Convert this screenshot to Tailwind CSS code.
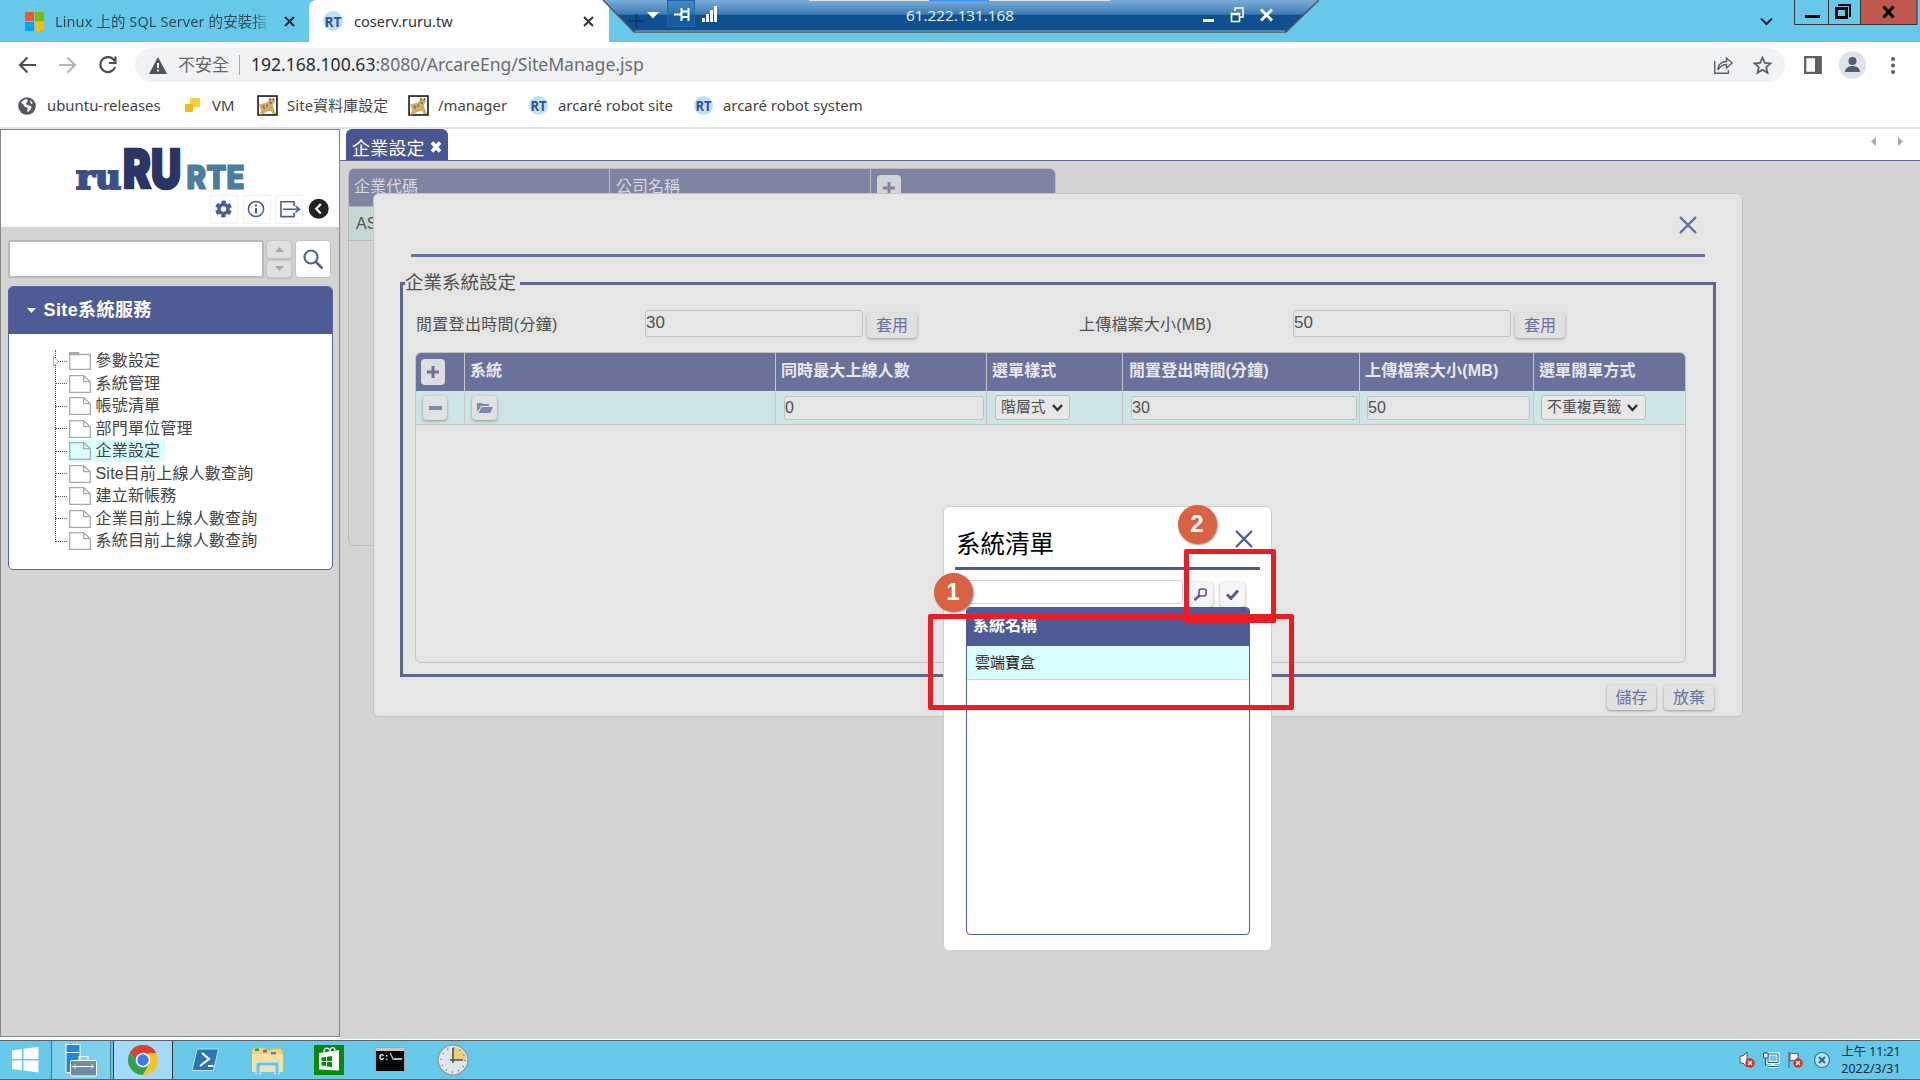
<!DOCTYPE html>
<html lang="zh-Hant">
<head>
<meta charset="utf-8">
<title>coserv.ruru.tw</title>
<script src="https://cdn.jsdelivr.net/npm/@tailwindcss/browser@4"></script>
</head>
<body class="relative flex h-[1080px] w-[1920px] flex-col overflow-hidden bg-white font-['Liberation_Sans','Noto_Sans_CJK_TC',sans-serif] text-[16px] text-[#333]">

<svg class="hidden">
  <symbol id="rt" viewBox="0 0 20 20"><circle cx="10" cy="10" r="10" fill="#bfe1f7"/><text x="1.5" y="15.5" font-size="15" font-weight="700" font-family="Open Sans" fill="#35508c" textLength="17" lengthAdjust="spacingAndGlyphs">RT</text></symbol>
  <symbol id="cat" viewBox="0 0 20 20"><rect x="1" y="1" width="18" height="18" fill="#fff" stroke="#222" stroke-width="1.6"/><path d="M2 9l4-1 4-1 2-4 2 1 3-1v4l-2 2 1 4 2 5h-3l-2-3-4 1-3 2-4 1 2-4z" fill="#d0ac68"/><path d="M12 3l1 2M16 3l-1 2M6 10l1 3M10 9l-1 2M12 7l2 1" fill="none" stroke="#6d5836" stroke-width="1.200"/></symbol>
  <symbol id="file" viewBox="0 0 22 18"><path d="M.7.7h14l6.600 6v10.600H.7zM14.700.7v6h6.600" fill="none" stroke="#aaa" stroke-width="1.3"/></symbol>
  <symbol id="bad" viewBox="0 0 10 10"><circle cx="5" cy="5" r="4.7" fill="#d92b20"/><path d="M3 3l4 4M7 3L3 7" stroke="#fff" stroke-width="1.5"/></symbol>
</svg>

<!-- Tab strip -->
<header class="flex h-[42px] shrink-0 items-start bg-[#67c9ea] font-['Noto_Sans','Noto_Sans_CJK_TC',sans-serif] text-[14.5px]">
  <div class="flex h-[42px] w-[309px] items-center pl-[25px]">
    <svg class="size-[19px]" viewBox="0 0 19 19"><path fill="#f35325" d="M0 0h9v9H0z"/><path fill="#7fba00" d="M10 0h9v9h-9z"/><path fill="#00a4ef" d="M0 10h9v9H0z"/><path fill="#ffba08" d="M10 10h9v9h-9z"/></svg>
    <div class="mt-[2px] ml-[11px] w-[215px] bg-linear-to-r from-[#2c4450] from-92% to-[#67c9ea] bg-clip-text tracking-[0.1px] whitespace-nowrap text-transparent">Linux 上的 SQL Server 的安裝指</div>
    <svg class="ml-[14px] size-[11px]" viewBox="0 0 11 11"><path d="M1 1l9 9M10 1l-9 9" stroke="#223" stroke-width="1.9"/></svg>
  </div>
  <div class="flex h-[42px] w-[300px] items-center rounded-t-lg bg-white pl-[14px]">
    <svg class="size-[20px]"><use href="#rt"/></svg>
    <span class="mt-[2px] ml-[11px] w-[229px] tracking-[0.05px]">coserv.ruru.tw</span>
    <svg class="size-[11px]" viewBox="0 0 11 11"><path d="M1 1l9 9M10 1l-9 9" stroke="#333" stroke-width="1.9"/></svg>
  </div>
  <svg class="-ml-[6px] h-[33px] w-[716px]" viewBox="603 0 716 33">
    <defs><linearGradient id="rdp" x1="0" y1="0" x2="0" y2="1"><stop offset="0" stop-color="#7aacd8"/><stop offset=".45" stop-color="#3d7cb5"/><stop offset=".46" stop-color="#11508f"/><stop offset="1" stop-color="#11508f"/></linearGradient></defs>
    <path d="M603 0h716l-33 32H634z" fill="url(#rdp)"/>
    <path d="M603 0l31 32h652l33-32" fill="none" stroke="#555" stroke-width="1.5"/>
    <path d="M635 31h650" stroke="#8bb0d6"/>
    <path d="M809 .5h301" stroke="#dde1e6"/><path d="M929 .5h60" stroke="#3a93ff" stroke-width="1.5"/>
    <path d="M629 21h15M636.500 14v14" stroke="#123a70" stroke-width="2"/>
    <path d="M647 12h12l-6 6.500z" fill="#fff"/>
    <rect x="667.500" y=".5" width="27" height="26" fill="#1a67b0" fill-opacity=".5" stroke="#1c66b0"/>
    <path d="M674 14.500h7M681.500 8v13M681 11.500h8M681 17h8M688.500 8v13" stroke="#fff" stroke-width="2" fill="none"/>
    <path d="M702 18h3v4h-3zM706 14h3v8h-3zM710 10h3v12h-3zM714 6h3v16h-3z" fill="#fff"/>
    <text x="906" y="21" font-size="15" font-family="Open Sans" fill="#e8f2fb" textLength="108" lengthAdjust="spacingAndGlyphs">61.222.131.168</text>
    <path d="M1203 19h11v3h-11z" fill="#fff"/>
    <path d="M1235 11V8h8v9h-3M1231.500 13.500h8v8h-8zM1231 14.500h9" fill="none" stroke="#fff" stroke-width="1.600"/>
    <path d="M1261 9.500l11 11M1272 9.500l-11 11" stroke="#fff" stroke-width="2.800"/>
  </svg>
  <svg class="ml-[441px] mt-[17px] h-[9px] w-[13px]" viewBox="0 0 13 9"><path d="M1 1.500l5.500 5.500L12 1.500" fill="none" stroke="#223" stroke-width="2"/></svg>
  <svg class="ml-[21px] h-[26px] w-[124px]" viewBox="0 0 124 26"><path d="M66 0h57v24H66z" fill="#c1584e"/><path d="M.5 0v24.500h122.500V0M34.500 0v24M66.500 0v24" fill="none" stroke="#333"/><path d="M11 15h15v3H11z"/><path d="M42.500 8.500h10v9h-10z" fill="none" stroke="#000" stroke-width="3"/><path d="M44 5h12v12" fill="none" stroke="#000" stroke-width="2"/><path d="M89.500 6.500l10 11M99.500 6.500l-10 11" stroke="#000" stroke-width="3"/></svg>
</header>

<!-- Address bar -->
<div class="flex h-[46px] shrink-0 items-center pl-[18px] font-['Noto_Sans','Noto_Sans_CJK_TC',sans-serif]">
  <svg class="h-[18px] w-[100px]" viewBox="18 56 100 18" fill="none" stroke-width="2.200"><path d="M36 65H20M27.500 57.500L20 65l7.500 7.500" stroke="#4a4d51"/><path d="M59 65h16M67.500 57.500L75 65l-7.500 7.500" stroke="#b5b7b9"/><path d="M114.500 61a7.500 7.500 0 1 0 .5 6M115.500 56.500v6.500h-6.500" stroke="#4a4d51"/></svg>
  <div class="ml-[17px] flex h-[34px] w-[1650px] items-center rounded-full bg-[#f1f2f3] pl-[14px]">
    <svg class="h-[17px] w-[18px]" viewBox="0 0 18 17"><path d="M9 0l9 17H0z" fill="#505357"/><path d="M8 6h2v5H8zM8 12.500h2v2H8z" fill="#fff"/></svg>
    <span class="ml-[11px] w-[61px] text-[17px] text-[#666]">不安全</span>
    <span class="h-5 w-px bg-[#aaa]"></span>
    <span class="mb-px ml-[11px] w-[1463px] whitespace-nowrap text-[17.6px] tracking-[-0.03px] text-[#6a6d70]"><span class="text-[#2b2c2e]">192.168.100.63</span>:8080/ArcareEng/SiteManage.jsp</span>
    <svg class="h-[20px] w-[60px]" viewBox="1714 55 60 20" fill="none" stroke="#5c5f63" stroke-width="1.400"><path d="M1714.700 61v12.300h13.600v-3M1718 70c0-6 4-8.500 8.500-8.500V58l5.500 5-5.500 5v-3.500c-4 0-6.500 1.500-8.500 5.500z"/><path d="M1762.500 57.500l2.300 5.400 5.700.5-4.300 3.800 1.300 5.600-5-3-5 3 1.300-5.600-4.300-3.800 5.700-.5z" stroke-width="1.800"/></svg>
  </div>
  <svg class="ml-[19px] h-[28px] w-[96px]" viewBox="1804 51 96 28"><path d="M1805.200 57.200h15.600v15.600h-15.600z" fill="#fff" stroke="#5b5e63" stroke-width="2.200"/><path d="M1815 56h6v18h-6z" fill="#5b5e63"/><circle cx="1852.500" cy="65" r="13.700" fill="#dfe2e7"/><circle cx="1852.500" cy="61" r="4" fill="#535d73"/><path d="M1845 72c0-8 15-8 15 0z" fill="#535d73"/><g fill="#5b5e63"><circle cx="1893" cy="59" r="2"/><circle cx="1893" cy="65.500" r="2"/><circle cx="1893" cy="72" r="2"/></g></svg>
</div>

<!-- Bookmarks -->
<nav class="flex h-[41px] shrink-0 items-center border-b-2 border-[#e2e3e4] pb-[4px] pl-[18px] font-['Noto_Sans','Noto_Sans_CJK_TC',sans-serif] text-[14.9px] whitespace-nowrap text-[#444]">
  <svg class="size-[18px]" viewBox="0 0 18 18"><circle cx="9" cy="9" r="8.800" fill="#55585c"/><path d="M3 6c2-3 4-4 6-4l1 2-2 2 1 2 4 1c1 2 0 4-3 6l-1-1 1-3-3-1-2-3zM12 3l3 3-2 1z" fill="#fff"/></svg>
  <span class="ml-[11px] w-[138px]">ubuntu-releases</span>
  <svg class="size-[15px]" viewBox="0 0 15 15"><rect x="5" y="0" width="10" height="9" rx="1" fill="#f7cf3f"/><rect x="0" y="6" width="8" height="8" rx="1" fill="#f2bb18"/></svg>
  <span class="ml-[12px] w-[45px]">VM</span>
  <svg class="size-[21px]"><use href="#cat"/></svg>
  <span class="ml-[9px] w-[121px] tracking-[0.1px]">Site資料庫設定</span>
  <svg class="size-[21px]"><use href="#cat"/></svg>
  <span class="ml-[9px] w-[91px]">/manager</span>
  <svg class="size-[19px]"><use href="#rt"/></svg>
  <span class="ml-[10px] w-[136px]">arcaré robot site</span>
  <svg class="size-[19px]"><use href="#rt"/></svg>
  <span class="ml-[10px]">arcaré robot system</span>
</nav>

<div class="flex h-[911px] shrink-0">
  <!-- Sidebar -->
  <aside class="flex h-[908px] w-[340px] shrink-0 flex-col border-[1.500px] border-[#858585] bg-[#d4d4d4]">
    <div class="h-[97px] bg-white">
      <svg class="h-[97px] w-[337px]" viewBox="1 130 337 97">
        <g font-family="Inter" font-weight="900">
          <text x="76" y="188.500" font-family="DejaVu Serif" font-size="33" fill="#3d4f8a" stroke="#3d4f8a" stroke-width="2.200" textLength="45" lengthAdjust="spacingAndGlyphs">ru</text>
          <text x="123" y="188" font-size="54" fill="#2b3563" stroke="#2b3563" stroke-width="2.500" textLength="58" lengthAdjust="spacingAndGlyphs">RU</text>
          <text x="186.500" y="189" font-size="32.500" fill="#4d7d9e" stroke="#4d7d9e" textLength="58" lengthAdjust="spacingAndGlyphs">RTE</text>
        </g>
        <g fill="none" stroke="#f1f1f3"><path d="M210.500 195.500h27v28h-27zM243.500 195.500h27v28h-27zM275.500 195.500h27v28h-27z"/></g>
        <circle cx="223.500" cy="209" r="4.500" fill="none" stroke="#4f5c94" stroke-width="3.500"/><circle cx="223.500" cy="209" r="7" fill="none" stroke="#4f5c94" stroke-width="2.800" stroke-dasharray="4.330 3" stroke-dashoffset="-1.500"/>
        <circle cx="256" cy="209" r="7.600" fill="none" stroke="#4f5c94" stroke-width="1.500"/><path d="M255 204.500h2v2h-2zM255 208h2v5.500h-2z" fill="#4f5c94"/>
        <path d="M294 206v-4.200h-13v14.800h13v-4.200M283 209.200h15M295.500 206l4 3.200-4 3.200" fill="none" stroke="#4f5c94" stroke-width="1.600"/>
        <circle cx="318.700" cy="208.700" r="10" fill="#222"/><path d="M320.800 204l-4.500 4.700 4.500 4.700" fill="none" stroke="#fff" stroke-width="2.200"/>
      </svg>
    </div>
    <div class="mt-[13px] ml-[7px] flex h-[38px] w-[324px] items-start">
      <div class="h-[38px] w-[256px] rounded-[3px] border-2 border-[#b9b9b9] bg-white"></div>
      <div class="mr-[3px] ml-[2px] flex h-[38px] w-[26px] flex-col gap-px">
        <div class="flex flex-1 items-center justify-center rounded border border-[#c6c6c6] bg-[#dfdfdf] text-[#a4a9b2] shadow-sm"><svg class="h-[5px] w-[9px]" viewBox="0 0 9 5"><path d="M0 5L4.500 0 9 5z" fill="currentColor"/></svg></div>
        <div class="flex flex-1 items-center justify-center rounded border border-[#c6c6c6] bg-[#dfdfdf] text-[#a4a9b2] shadow-sm"><svg class="h-[5px] w-[9px]" viewBox="0 0 9 5"><path d="M0 0L4.500 5 9 0z" fill="currentColor"/></svg></div>
      </div>
      <div class="flex h-[38px] w-[36px] items-center justify-center rounded border border-[#c0c0c0] bg-white"><svg class="size-[21px]" viewBox="0 0 21 21"><circle cx="8" cy="8" r="6.500" fill="none" stroke="#56639b" stroke-width="2.200"/><path d="M12.500 12.500l7 7" stroke="#56639b" stroke-width="2.600"/></svg></div>
    </div>
    <div class="mt-[8px] ml-[6.500px] h-[284px] w-[325px] overflow-hidden rounded-[5px] border-[1.500px] border-[#5a679c] bg-white">
      <div class="flex h-[47px] items-center bg-[#4f5b94] pl-[18px] text-[18px] font-bold text-white"><svg class="h-[5px] w-[9px]" viewBox="0 0 9 5"><path d="M0 0L4.500 5 9 0z" fill="#fff"/></svg><span class="ml-[8px] tracking-[0.4px]">Site系統服務</span></div>
      <div class="relative ml-[46px] mt-[16px] flex flex-col tracking-[0.2px] whitespace-nowrap text-[#444]">
        <div class="absolute left-0 top-0 h-[192px] w-0 border-l border-dotted border-[#555]"></div>
        <svg class="absolute top-[6px] left-[-2px] h-[11px] w-[6px]" viewBox="0 0 6 11"><path d="M.5.8L5.300 5.500.5 10.200z" fill="#fff" stroke="#aaa"/></svg>
        <div class="flex h-[22.500px] items-center"><i class="w-[12px] border-t border-dotted border-[#555]"></i><div class="ml-px flex h-[22px] items-center pl-[1px]"><svg class="h-[18px] w-[22px]" viewBox="0 0 22 18"><path d="M.7 2.500h20.600v14.800H.7z" fill="none" stroke="#aaa" stroke-width="1.300"/><path d="M0 0h10l1 3H0z" fill="#aaa"/></svg><span class="ml-[5px]">參數設定</span></div></div>
        <div class="flex h-[22.500px] items-center"><i class="w-[12px] border-t border-dotted border-[#555]"></i><div class="ml-px flex h-[22px] items-center pl-[1px]"><svg class="h-[18px] w-[22px]"><use href="#file"/></svg><span class="ml-[5px]">系統管理</span></div></div>
        <div class="flex h-[22.500px] items-center"><i class="w-[12px] border-t border-dotted border-[#555]"></i><div class="ml-px flex h-[22px] items-center pl-[1px]"><svg class="h-[18px] w-[22px]"><use href="#file"/></svg><span class="ml-[5px]">帳號清單</span></div></div>
        <div class="flex h-[22.500px] items-center"><i class="w-[12px] border-t border-dotted border-[#555]"></i><div class="ml-px flex h-[22px] items-center pl-[1px]"><svg class="h-[18px] w-[22px]"><use href="#file"/></svg><span class="ml-[5px]">部門單位管理</span></div></div>
        <div class="flex h-[22.500px] items-center"><i class="w-[12px] border-t border-dotted border-[#555]"></i><div class="ml-px flex h-[22px] items-center bg-[#d9feff] pr-[5px] pl-[1px]"><svg class="h-[18px] w-[22px]"><use href="#file"/></svg><span class="ml-[5px]">企業設定</span></div></div>
        <div class="flex h-[22.500px] items-center"><i class="w-[12px] border-t border-dotted border-[#555]"></i><div class="ml-px flex h-[22px] items-center pl-[1px]"><svg class="h-[18px] w-[22px]"><use href="#file"/></svg><span class="ml-[5px]">Site目前上線人數查詢</span></div></div>
        <div class="flex h-[22.500px] items-center"><i class="w-[12px] border-t border-dotted border-[#555]"></i><div class="ml-px flex h-[22px] items-center pl-[1px]"><svg class="h-[18px] w-[22px]"><use href="#file"/></svg><span class="ml-[5px]">建立新帳務</span></div></div>
        <div class="flex h-[22.500px] items-center"><i class="w-[12px] border-t border-dotted border-[#555]"></i><div class="ml-px flex h-[22px] items-center pl-[1px]"><svg class="h-[18px] w-[22px]"><use href="#file"/></svg><span class="ml-[5px]">企業目前上線人數查詢</span></div></div>
        <div class="flex h-[22.500px] items-center"><i class="w-[12px] border-t border-dotted border-[#555]"></i><div class="ml-px flex h-[22px] items-center pl-[1px]"><svg class="h-[18px] w-[22px]"><use href="#file"/></svg><span class="ml-[5px]">系統目前上線人數查詢</span></div></div>
      </div>
    </div>
  </aside>

  <!-- Page behind the dialogs -->
  <main class="flex h-[910px] w-[1580px] flex-col bg-[#d4d4d4]">
    <div class="flex h-[32px] items-end border-b border-[#626a9e] bg-white pl-[6px]">
      <div class="flex h-[31px] w-[102px] items-center rounded-t-md bg-[#4a5594] pt-[9px] pl-[6px] text-[18px] text-white"><span class="tracking-[0.2px]">企業設定</span><svg class="mb-[5px] ml-[5px] size-[12px]" viewBox="0 0 12 12"><path d="M2 1.500l8 9M10 1.500l-8 9" stroke="#fff" stroke-width="3.600"/></svg></div>
      <svg class="mb-[13px] ml-[1423px] h-[10px] w-[32px]" viewBox="0 0 32 10"><path d="M5 0v9L0 4.500zM27 0v9l5-4.500z" fill="#aaa"/></svg>
    </div>
    <div class="mt-[7px] ml-[8px] h-[378px] w-[708px] overflow-hidden rounded-md border border-[#bcbcbc]">
      <div class="flex h-[38px] items-center border-b border-[#b5b5b5] bg-[#7f84a2] text-[#d8d8dc]">
        <div class="h-full w-[261px] border-r border-[#bbb] pt-[6px] pl-[5px]">企業代碼</div>
        <div class="h-full w-[261px] border-r border-[#bbb] pt-[6px] pl-[6px]">公司名稱</div>
        <div class="ml-[6px] flex h-[25px] w-[24px] items-center justify-center rounded bg-[#d4d4d4]"><svg class="size-[12px]" viewBox="0 0 12 12"><path d="M6 0v12M0 6h12" stroke="#7f84a2" stroke-width="3"/></svg></div>
      </div>
      <div class="h-[34px] border-b border-[#bbb] bg-[#c3d7d7] pt-[5px] pl-[7px] text-[#555]">AS</div>
    </div>
  </main>
</div>

<!-- Taskbar -->
<footer class="flex h-[40px] shrink-0 items-center justify-between border-y border-[#56646c] bg-[#67c9ea]">
  <svg class="h-[38px] w-[500px]" viewBox="0 1041 500 38">
    <path d="M51.500 1040v40M110.500 1040v40" stroke="#3f7d96"/><path d="M52 1040h58v40H52z" fill="#7bd1ed"/><path d="M113.500 1040.500h59v39h-59z" fill="#a3daf7" stroke="#333"/>
    <path d="M12 1050.500l10-1.500v10H12zM23.500 1048.700l15-2v12.300h-15zM12 1060.500h10v10l-10-1.500zM23.500 1060.500h15v12l-15-2z" fill="#fff"/>
    <path d="M66 1044.500h14v28H66z" fill="#1c8bd6" stroke="#fff"/><path d="M66 1052.500h14" stroke="#fff"/><rect x="70.500" y="1060.500" width="26" height="15.500" rx="1" fill="#6f8da3" stroke="#fff"/><path d="M79 1060v-3.500h9v3.500M72 1066.500h22M75 1064.500v4M92 1064.500v4" fill="none" stroke="#fff" stroke-width="1.200"/>
    <g transform="translate(143 1060)"><path d="M0 0L-13-7.500A15 15 0 0 1 13-7.500z" fill="#dc4034"/><path d="M-13-7.500A15 15 0 0 0 0 15L6.500 4-6.500 4z" fill="#34a04f"/><path d="M13-7.500A15 15 0 0 1 0 15L7 3 5-7.500z" fill="#fcc31e"/><path d="M-13-7.500L-6.500 4 0-7.500z" fill="#34a04f"/><path d="M-13-7.500L-7-2 0-7h13.200A15 15 0 0 0-13-7.500z" fill="#dc4034"/><circle r="7.300" fill="#fff"/><circle r="5.700" fill="#3a7bed"/></g>
    <path d="M197 1049h21.500l-5 21.500H192z" fill="#2d76b5" stroke="#bfe0f2"/><path d="M202 1053l7 6-9 7M208 1066h5.500" fill="none" stroke="#fff" stroke-width="2.200"/>
    <path d="M252 1050l2-2.500h9l2 2.500h6l2-1.500h8l2 4v19h-31z" fill="#eed180" stroke="#d8b45b"/><path d="M252 1054h31v18h-31z" fill="#f5e29c"/><path d="M255 1048.500h4v2.500h-4z" fill="#28a745"/><path d="M263 1050h4v2.500h-4z" fill="#d64a3d"/><path d="M271 1052h5v2.500h-5z" fill="#3c8ed8"/><path d="M258 1075v-11h19v11" fill="none" stroke="#70bfe6" stroke-width="4.500"/><path d="M256 1075v-13h23v13M260 1075v-9h15v9" fill="none" stroke="#d9f3ff"/>
    <path d="M314 1045h30v30h-30z" fill="#058a0b"/><path d="M319 1053l20-3v20.500l-20-1z" fill="#fff"/><path d="M324 1054v-2c0-5 6-5 6-.5 0-5 5-5 5-1" fill="none" stroke="#fff" stroke-width="1.300"/><path d="M321.500 1057.500l4.500-.6v4h-4.500zM327 1056.700l5-.7v5h-5zM321.500 1062h4.500v4l-4.500-.5zM327 1062h5v5l-5-.6z" fill="#058a0b"/>
    <path d="M375.500 1047.500h29v24h-29z" fill="#080808" stroke="#aaa"/><path d="M376 1048h28v3h-28z" fill="#c8c8c8"/><text x="379" y="1060" font-size="8.500" font-weight="700" font-family="Liberation Mono" fill="#fff">C:\</text><path d="M394 1059h8" stroke="#fff" stroke-width="1.400"/>
    <circle cx="453" cy="1060" r="15" fill="#dfe5ea" stroke="#8fa0aa" stroke-width="1.500"/><path d="M453 1060v-13a13 13 0 0 1 13 13z" fill="#f0cd7b"/><circle cx="453" cy="1060" r="12" fill="none" stroke="#76858e" stroke-width="1.800" stroke-dasharray="1 5.283"/><path d="M453 1048v15M450 1060h13" fill="none" stroke="#455763" stroke-width="1.600"/>
  </svg>
  <div class="flex items-center">
    <svg class="h-[24px] w-[92px]" viewBox="1737 1048 92 24">
      <path d="M1738 1056h3l4-4v15l-4-4h-3z" fill="#fff" stroke="#456"/><use href="#bad" x="1743" y="1058" width="10" height="10"/>
      <path d="M1766 1054h10v8.500h-10zM1766 1066.500h9M1770.500 1063v3" fill="none" stroke="#fff" stroke-width="3"/><path d="M1766 1054h10v8.500h-10zM1766 1066.500h9M1763.500 1052v14" fill="none" stroke="#34515f"/><path d="M1761.500 1053h4.500v5h-4.500z" fill="#fff" stroke="#34515f"/>
      <path d="M1787 1052v16M1788 1054c3-2 4 1 8-1v7c-4 2-5-1-8 1z" fill="#fff" stroke="#456"/><use href="#bad" x="1791" y="1058" width="10" height="10"/>
      <circle cx="1820" cy="1060" r="7.500" fill="#b7e4f5" stroke="#3a7288" stroke-width="1.200"/><path d="M1817 1057l6 6M1823 1057l-6 6" stroke="#34677c" stroke-width="2"/>
    </svg>
    <div class="mr-[17px] ml-[8px] flex w-[64px] flex-col items-center font-['Noto_Sans','Noto_Sans_CJK_TC',sans-serif] text-[12.300px] leading-[17px] whitespace-nowrap text-[#132a34]"><span>上午 11:21</span><span class="tracking-[0.1px]">2022/3/31</span></div>
  </div>
</footer>

<!-- Company settings dialog -->
<section class="absolute top-[193px] left-[373px] h-[524px] w-[1370px] rounded-md border-[1.500px] border-[#c4c4c4] bg-[#e5e5e5] text-[#505050]">
  <div class="ml-[37px] flex h-[63px] w-[1294px] items-center justify-end border-b-[3px] border-[#6a719b] pt-[2px] pr-[8px]">
    <svg class="size-[18px]" viewBox="0 0 18 18"><path d="M1 1l16 16M17 1L1 17" stroke="#646d99" stroke-width="2.400"/></svg>
  </div>
  <fieldset class="mt-[13px] ml-[26px] h-[407px] w-[1316px] border-[3px] border-[#5f6689] pl-[12px]">
    <legend class="-ml-[10px] pr-[4px] text-[18.500px] leading-[26px]">企業系統設定</legend>
    <div class="mt-[14px] flex h-[32px] items-start">
      <span class="mt-[3px] ml-px w-[229px] tracking-[0.3px]">閒置登出時間(分鐘)</span>
      <div class="h-[27px] w-[218px] rounded-[3px] border-[1.500px] border-[#c3c3c3] text-[17px] leading-[24px]">30</div>
      <div class="mt-[3px] ml-[4px] h-[25px] w-[50px] rounded bg-[#e1e1e1] text-center leading-[26px] text-[#6973a1] shadow-[0_1px_3px_rgba(0,0,0,0.35)]">套用</div>
      <span class="mt-[3px] ml-[162px] w-[214px] tracking-[0.2px]">上傳檔案大小(MB)</span>
      <div class="h-[27px] w-[218px] rounded-[3px] border-[1.500px] border-[#c3c3c3] text-[17px] leading-[24px]">50</div>
      <div class="mt-[3px] ml-[4px] h-[25px] w-[50px] rounded bg-[#e1e1e1] text-center leading-[26px] text-[#6973a1] shadow-[0_1px_3px_rgba(0,0,0,0.35)]">套用</div>
    </div>
    <div class="mt-[10px] h-[311px] w-[1271px] overflow-hidden rounded-md border-[1.500px] border-[#c4c4c4]">
      <div class="grid h-[38px] grid-cols-[49px_311px_211px_136px_237px_174px_1fr] divide-x divide-[#c2c4cc] bg-[#6a719b] leading-[36px] font-bold tracking-[0.1px] text-[#e8e8ee]">
        <div class="flex items-center pl-[5px]"><div class="flex h-[26px] w-[24px] items-center justify-center rounded bg-[#dcdde0]"><svg class="size-[12px]" viewBox="0 0 12 12"><path d="M6 0v12M0 6h12" stroke="#6a719b" stroke-width="3"/></svg></div></div>
        <div class="pl-[5px]">系統</div><div class="pl-[5px]">同時最大上線人數</div><div class="pl-[5px]">選單樣式</div><div class="pl-[6px]">閒置登出時間(分鐘)</div><div class="pl-[5px] tracking-[0.2px]">上傳檔案大小(MB)</div><div class="pl-[5px]">選單開單方式</div>
      </div>
      <div class="grid h-[34px] grid-cols-[49px_311px_211px_136px_237px_174px_1fr] items-stretch divide-x divide-[#c4caca] border-b border-[#c4c4c4] bg-[#cce4e4]">
        <div class="flex items-center pl-[7px]"><div class="flex h-[24px] w-[24px] items-center justify-center rounded bg-[#e1e1e1] shadow-[0_1px_3px_rgba(0,0,0,0.35)]"><svg class="h-[4px] w-[13px]"><rect width="13" height="4" fill="#7f88b0"/></svg></div></div>
        <div class="flex items-center pl-[7px]"><div class="flex h-[24px] w-[25px] items-center justify-center rounded bg-[#e1e1e1] shadow-[0_1px_3px_rgba(0,0,0,0.35)]"><svg class="h-[11px] w-[16px]" viewBox="0 0 16 11" fill="#7f88b0"><path d="M0 9V1h5l1 1h6v2H4L1 9z"/><path d="M4.500 5H16l-3 6H1.500z"/></svg></div></div>
        <div class="flex items-center pl-[8px]"><div class="h-[24px] w-[200px] rounded-[3px] border-[1.500px] border-[#c0c0c0] bg-[#e5e5e5] leading-[21px]">0</div></div>
        <div class="flex items-center pl-[8px]"><div class="flex h-[25px] w-[75px] items-center rounded-[3px] border border-[#bbb] bg-[#e7e7e7] pl-[5px] text-[14.900px] whitespace-nowrap">階層式<svg class="ml-[6px] h-[8px] w-[11px]" viewBox="0 0 11 8"><path d="M1 1l4.500 5L10 1" fill="none" stroke="#333" stroke-width="2.400"/></svg></div></div>
        <div class="flex items-center pl-[8px]"><div class="h-[24px] w-[226px] rounded-[3px] border-[1.500px] border-[#c0c0c0] bg-[#e5e5e5] leading-[21px]">30</div></div>
        <div class="flex items-center pl-[7px]"><div class="h-[24px] w-[163px] rounded-[3px] border-[1.500px] border-[#c0c0c0] bg-[#e5e5e5] leading-[21px]">50</div></div>
        <div class="flex items-center pl-[7px]"><div class="flex h-[25px] w-[105px] items-center rounded-[3px] border border-[#bbb] bg-[#e7e7e7] pl-[5px] text-[14.900px] whitespace-nowrap">不重複頁籤<svg class="ml-[6px] h-[8px] w-[11px]" viewBox="0 0 11 8"><path d="M1 1l4.500 5L10 1" fill="none" stroke="#333" stroke-width="2.400"/></svg></div></div>
      </div>
    </div>
  </fieldset>
  <div class="mt-[8px] ml-[1233px] flex gap-[8px] leading-[26px] text-[#6973a1]">
    <div class="h-[25px] w-[49px] rounded bg-[#e1e1e1] text-center shadow-[0_1px_3px_rgba(0,0,0,0.35)]">儲存</div>
    <div class="h-[25px] w-[50px] rounded bg-[#e1e1e1] text-center shadow-[0_1px_3px_rgba(0,0,0,0.35)]">放棄</div>
  </div>
</section>

<!-- System list dialog -->
<section class="absolute top-[506px] left-[943px] flex h-[445px] w-[329px] flex-col rounded-md border-[1.500px] border-[#cfcfcf] bg-white text-[#222]">
  <div class="ml-[11px] flex h-[63px] w-[305px] items-center justify-between border-b-[3px] border-[#4f5b94] pt-[17px] pr-[7px] pl-[1px] text-[24.500px] text-black">
    <span>系統清單</span>
    <svg class="mt-[-14px] size-[18px]" viewBox="0 0 18 18"><path d="M1 1l16 16M17 1L1 17" stroke="#4f5b94" stroke-width="2.300"/></svg>
  </div>
  <div class="mt-[10px] ml-[22px] flex h-[26px] items-start">
    <div class="h-[24px] w-[217px] rounded-[3px] border border-[#d4d4d4]"></div>
    <div class="mt-[2px] ml-[5px] flex size-[25px] items-center justify-center rounded bg-[#f6f6f6] shadow-[0_1px_3px_rgba(0,0,0,0.4)]"><svg class="size-[13px]" viewBox="0 0 13 13"><rect x="5" y="1" width="7" height="7" rx="2" fill="none" stroke="#4f5b94" stroke-width="1.600"/><path d="M5.500 7.500l-5 4.500" stroke="#4f5b94" stroke-width="2.500"/></svg></div>
    <div class="mt-[2px] ml-[7px] flex size-[25px] items-center justify-center rounded bg-[#f6f6f6] shadow-[0_1px_3px_rgba(0,0,0,0.4)]"><svg class="h-[11px] w-[13px]" viewBox="0 0 13 11"><path d="M1 5.500l4 4L12 1.500" fill="none" stroke="#4f5b94" stroke-width="2.900"/></svg></div>
  </div>
  <div class="mt-[1px] ml-[22px] h-[328px] w-[284px] overflow-hidden rounded-[4px] border-[1.500px] border-[#4f5b94]">
    <div class="h-[38px] bg-[#4f5b94] pl-[6px] leading-[36px] font-bold text-white">系統名稱</div>
    <div class="h-[34px] border-b border-[#cfd8d8] bg-[#d9feff] pl-[8px] text-[15px] leading-[34px]">雲端寶盒</div>
  </div>
</section>

<!-- Step annotations -->
<div class="absolute top-[614px] left-[928px] h-[96px] w-[366px] rounded-[2px] border-[5px] border-[#ed1c24]"></div>
<div class="absolute top-[549px] left-[1184px] h-[74px] w-[92px] rounded-[2px] border-[5px] border-[#ed1c24]"></div>
<div class="absolute top-[573px] left-[933.500px] flex size-[39px] items-center justify-center rounded-full bg-[#d96242] pb-[1px] text-[24px] font-bold text-white shadow-[1px_1px_2px_rgba(0,0,0,0.4)]">1</div>
<div class="absolute top-[505px] left-[1177.500px] flex size-[39px] items-center justify-center rounded-full bg-[#d96242] pb-[1px] text-[24px] font-bold text-white shadow-[1px_1px_2px_rgba(0,0,0,0.4)]">2</div>
</body>
</html>
